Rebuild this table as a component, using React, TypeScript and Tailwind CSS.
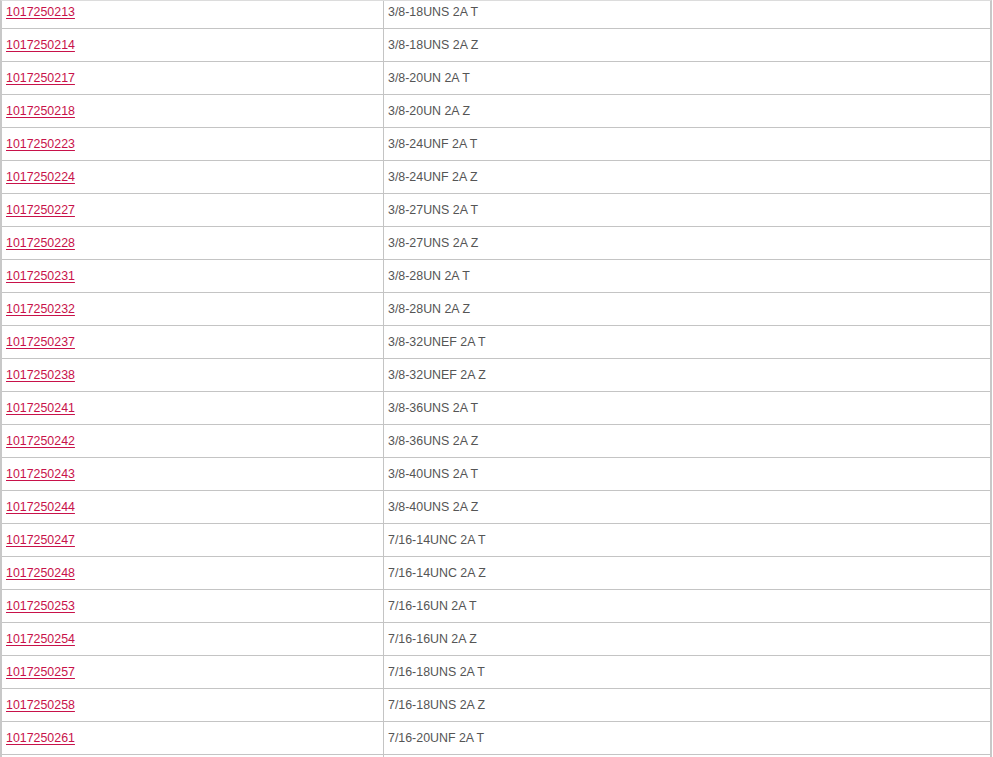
const rows: [string, string][] = [
  ['1017250213', '3/8-18UNS 2A T'],
  ['1017250214', '3/8-18UNS 2A Z'],
  ['1017250217', '3/8-20UN 2A T'],
  ['1017250218', '3/8-20UN 2A Z'],
  ['1017250223', '3/8-24UNF 2A T'],
  ['1017250224', '3/8-24UNF 2A Z'],
  ['1017250227', '3/8-27UNS 2A T'],
  ['1017250228', '3/8-27UNS 2A Z'],
  ['1017250231', '3/8-28UN 2A T'],
  ['1017250232', '3/8-28UN 2A Z'],
  ['1017250237', '3/8-32UNEF 2A T'],
  ['1017250238', '3/8-32UNEF 2A Z'],
  ['1017250241', '3/8-36UNS 2A T'],
  ['1017250242', '3/8-36UNS 2A Z'],
  ['1017250243', '3/8-40UNS 2A T'],
  ['1017250244', '3/8-40UNS 2A Z'],
  ['1017250247', '7/16-14UNC 2A T'],
  ['1017250248', '7/16-14UNC 2A Z'],
  ['1017250253', '7/16-16UN 2A T'],
  ['1017250254', '7/16-16UN 2A Z'],
  ['1017250257', '7/16-18UNS 2A T'],
  ['1017250258', '7/16-18UNS 2A Z'],
  ['1017250261', '7/16-20UNF 2A T'],
];

function Row({ code, spec, first }: { code: string; spec: string; first?: boolean }) {
  return (
    <div className={`grid grid-cols-[382px_1fr] border-b border-[#c4c4c4] overflow-hidden ${first ? 'h-[28px]' : 'h-[33px]'}`}>
      <div className={`border-r border-[#c4c4c4] pl-[4px] flex items-center h-[32px] ${first ? '-mt-[5px]' : ''}`}>
        <a href="#" className="text-[#c8124a] underline underline-offset-2">{code}</a>
      </div>
      <div className={`pl-[4px] flex items-center h-[32px] text-[#555] ${first ? '-mt-[5px]' : ''}`}>
        {spec}
      </div>
    </div>
  );
}

export default function App() {
  return (
    <div className="w-[993px] h-[757px] overflow-hidden bg-white font-['Liberation_Sans',Arial,sans-serif] text-[12.4px]">
      <div className="w-[992px] border-l-2 border-r-2 border-t border-l-[#c8c8c8] border-r-[#c8c8c8] border-t-[#dcdcdc]">
        {rows.map((r, i) => (
          <Row key={r[0]} code={r[0]} spec={r[1]} first={i === 0} />
        ))}
        {/* next row, cut off by the window */}
        <div className="grid grid-cols-[382px_1fr] h-[33px]">
          <div className="border-r border-[#c4c4c4]" />
          <div />
        </div>
      </div>
    </div>
  );
}
